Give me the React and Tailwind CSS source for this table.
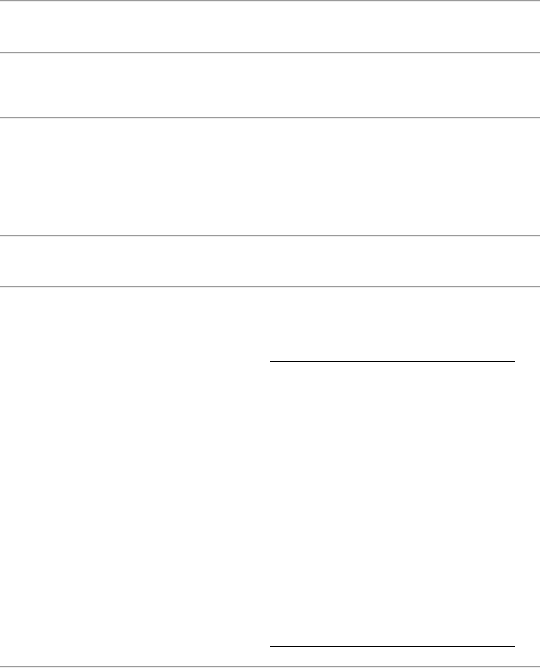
function Rule() {
  return <div className="h-[2px] border-t border-b border-t-[#9a9a9a] border-b-[#eeeeee]" />;
}

export default function App() {
  return (
    <div className="w-[540px] h-[668px] bg-white flex flex-col font-['Liberation_Sans',sans-serif]">
      <Rule />
      <section className="h-[50px]" />
      <Rule />
      <section className="h-[63px]" />
      <Rule />
      <section className="h-[116px]" />
      <Rule />
      <section className="h-[49px]" />
      <Rule />
      <section className="h-[378px] flex">
        <div className="w-[270px]" />
        <div className="w-[245px] mt-[73px] h-[286px] border-t border-b border-black" />
      </section>
      <Rule />
    </div>
  );
}
